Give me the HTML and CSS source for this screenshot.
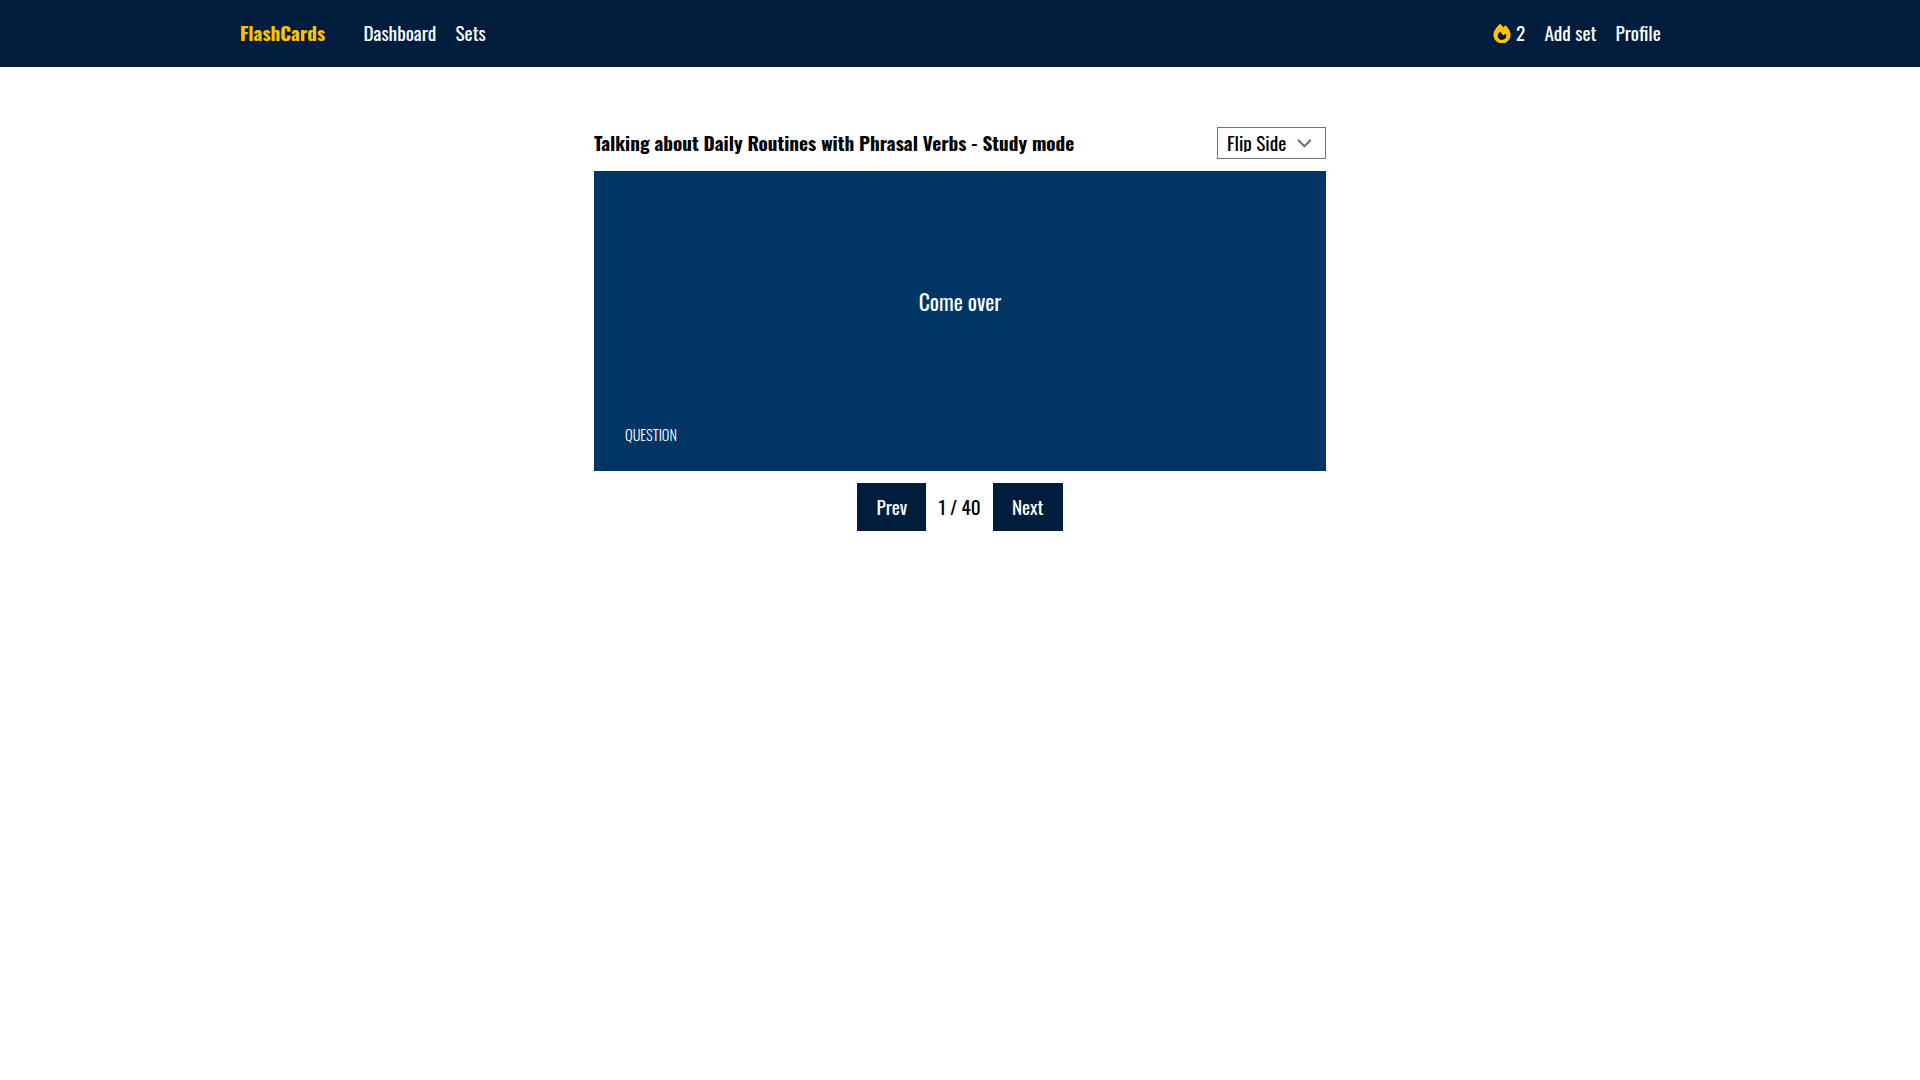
FILE: index.html
```html
<!DOCTYPE html>
<html lang="en">
<head>
<meta charset="utf-8">
<title>FlashCards - Study mode</title>
<link rel="stylesheet" href="styles.css">
</head>
<body>
<header class="navbar">
  <nav class="navbar-inner">
    <a class="brand">FlashCards</a>
    <div class="links">
      <a class="link">Dashboard</a>
      <a class="link">Sets</a>
    </div>
    <div class="links links-right">
      <span class="streak">
        <svg class="flame" viewBox="0 0 448 512" fill="currentColor"><path d="M159.3 5.4c7.8-7.3 19.9-7.2 27.7 .1c27.6 25.9 53.5 53.8 77.7 84c11-14.4 23.5-30.1 37-42.9c7.9-7.4 20.1-7.4 28 .1c34.6 33 63.9 76.6 84.5 118c20.3 40.8 33.8 82.5 33.8 111.9C448 404.2 348.2 512 224 512C98.4 512 0 404.1 0 276.5c0-38.4 17.8-85.3 45.4-131.7C73.3 97.7 112.7 48.6 159.3 5.4zM225.7 416c25.3 0 47.7-7 68.8-21c42.1-29.4 53.4-88.2 28.1-134.4c-4.5-9-16-9.6-22.5-2l-25.2 29.3c-6.6 7.6-18.5 7.4-24.7-.5c-16.5-21-46-58.5-62.8-79.8c-6.3-8-18.3-8.1-24.7-.1c-33.8 42.5-50.8 69.3-50.8 99.4C112 375.4 162.6 416 225.7 416z"/></svg>
        <span>2</span>
      </span>
      <a class="link">Add set</a>
      <a class="link">Profile</a>
    </div>
  </nav>
</header>
<main class="study">
  <div class="study-head">
    <h1 class="title">Talking about Daily Routines with Phrasal Verbs - Study mode</h1>
    <div class="select" role="combobox">
      <span class="select-value">Flip Side</span>
      <svg class="chevron" viewBox="0 0 20 20" fill="none" stroke="#6b7280" stroke-width="1.5" stroke-linecap="round" stroke-linejoin="round"><path d="M6 8l4 4 4-4"/></svg>
    </div>
  </div>
  <section class="card">
    <p class="term">Come over</p>
    <p class="side">QUESTION</p>
  </section>
  <div class="pager">
    <button class="btn">Prev</button>
    <span>1 / 40</span>
    <button class="btn">Next</button>
  </div>
</main>
</body>
</html>
```
FILE: styles.css
```css
* { box-sizing: border-box; margin: 0; padding: 0; }

body {
  font-family: Oswald, "Open Sans", sans-serif;
  font-size: 19.2px;
  line-height: 28.8px;
  color: #000;
  background: #fff;
}

.navbar { background: #001d3d; color: #fff; height: 67px; }

.navbar-inner {
  display: flex;
  align-items: center;
  width: 1440px;
  height: 67.2px;
  margin: 0 auto;
}

.brand { color: #ffc300; font-weight: 700; margin-right: 38.4px; }
.links { display: flex; align-items: center; gap: 19.2px; }
.links-right { margin-left: auto; margin-right: 19.2px; }
.streak { display: flex; align-items: center; gap: 5.3px; }
.flame { width: 18px; height: 19.6px; color: #ffc300; }

.study { width: 732px; margin: 60px auto 0; }

.study-head {
  display: flex;
  align-items: center;
  justify-content: space-between;
  height: 32px;
  margin-bottom: 12px;
}

.title { font-size: 19.2px; font-weight: 700; }

.select {
  display: flex;
  align-items: center;
  justify-content: space-between;
  width: 109px;
  height: 32px;
  padding: 0 6px 0 9px;
  border: 1px solid #6b7280;
  background: #fff;
}

.select-value { height: 18px; line-height: 18px; overflow: hidden; }
.chevron { width: 28.8px; height: 28.8px; flex: none; }

.card {
  display: flex;
  flex-direction: column;
  height: 300px;
  padding: 6px 31px 27px;
  background: #003566;
  color: #fff;
}

.term {
  flex: 1;
  display: flex;
  align-items: center;
  justify-content: center;
  font-size: 21.6px;
}

.side { font-size: 14.4px; line-height: 19.2px; font-weight: 300; }

.pager {
  display: flex;
  align-items: center;
  justify-content: center;
  gap: 12px;
  margin-top: 12px;
}

.btn {
  border: 0;
  padding: 9.6px 19.2px;
  background: #001d3d;
  color: #fff;
  font: inherit;
}
```
